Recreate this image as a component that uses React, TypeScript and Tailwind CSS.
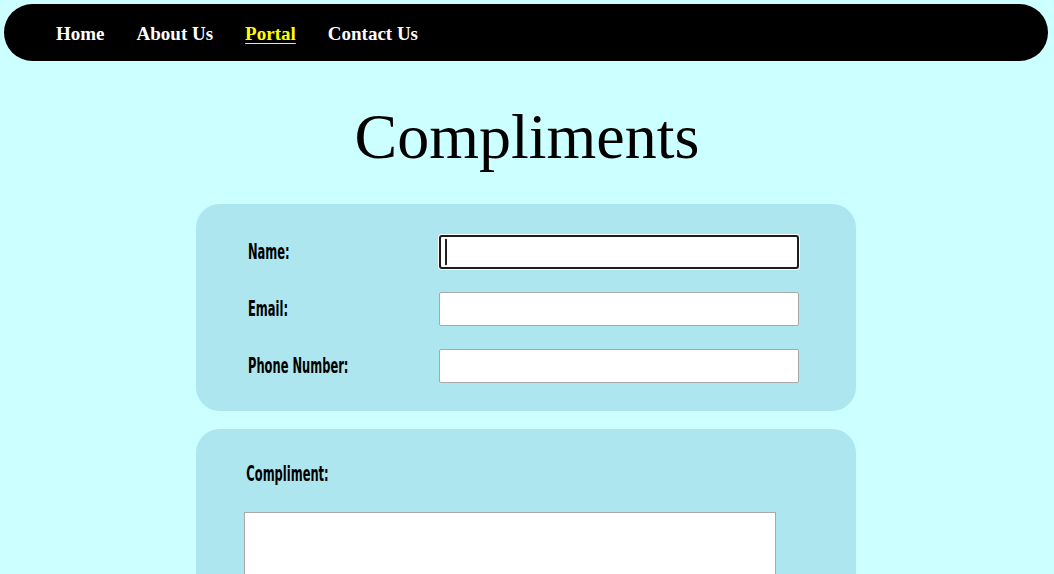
import React from 'react'

const navItems = [
    { label: 'Home', active: false },
    { label: 'About Us', active: false },
    { label: 'Portal', active: true },
    { label: 'Contact Us', active: false },
]

const labelFont = "font-['Liberation_Sans_Narrow','DejaVu_Sans_Condensed',sans-serif]"

const Field = ({ label, focused }: { label: string; focused?: boolean }) => (
    <div className="flex items-center h-[34px]">
        <div className="w-[191px]">
            <label className={`${labelFont} inline-block text-[22px] leading-[26px] font-bold text-black scale-x-[0.58] origin-left whitespace-nowrap`}>
                {label}
            </label>
        </div>
        {focused ? (
            <div className="relative w-[360px] h-[34px] rounded-[3px] ring-1 ring-white">
                <input className="w-full h-full bg-white border-2 border-[#1c1c1c] rounded-[3px] outline-none" />
                {/* caret */}
                <span className="absolute left-[6px] top-[4px] w-[2px] h-[26px] bg-[#222]"></span>
            </div>
        ) : (
            <input className="w-[360px] h-[34px] bg-white border border-[#a9a9a9] rounded-[2px] outline-none" />
        )}
    </div>
)

export default function App() {
    return (
        <div className="min-h-[574px] bg-[#ccffff] pt-[4px] overflow-hidden">
            {/* Nav */}
            <nav className="ml-[4px] mr-[6px] h-[57px] bg-black rounded-full flex items-center pl-[52px] pt-[3px] gap-[32px]">
                {navItems.map((item) => (
                    <a
                        key={item.label}
                        href="#"
                        className={`font-['Liberation_Serif',serif] font-bold text-[19px] ${item.active ? 'text-[#ffff00] underline underline-offset-[3px]' : 'text-white'}`}
                    >
                        {item.label}
                    </a>
                ))}
            </nav>

            <h1 className="font-['Liberation_Serif',serif] text-[64px] text-black text-center leading-none mt-[44px] mb-[35px]">
                Compliments
            </h1>

            <div className="flex flex-col items-center pr-[2px]">
                {/* Contact details */}
                <div className="w-[660px] bg-[#ade6ee] rounded-[24px] pt-[31px] pb-[28px] pl-[52px] flex flex-col gap-[23px]">
                    <Field label="Name:" focused />
                    <Field label="Email:" />
                    <Field label="Phone Number:" />
                </div>

                {/* Compliment */}
                <div className="w-[660px] mt-[18px] bg-[#ade6ee] rounded-[24px] pt-[32px] pl-[48px] pb-[40px]">
                    <label className={`${labelFont} inline-block pl-[4px] text-[22px] leading-[26px] font-bold text-black scale-x-[0.58] origin-left whitespace-nowrap`}>
                        Compliment:
                    </label>
                    <textarea className="block mt-[25px] w-[532px] h-[150px] bg-white border border-[#a9a9a9] outline-none resize-none"></textarea>
                </div>
            </div>
        </div>
    )
}
